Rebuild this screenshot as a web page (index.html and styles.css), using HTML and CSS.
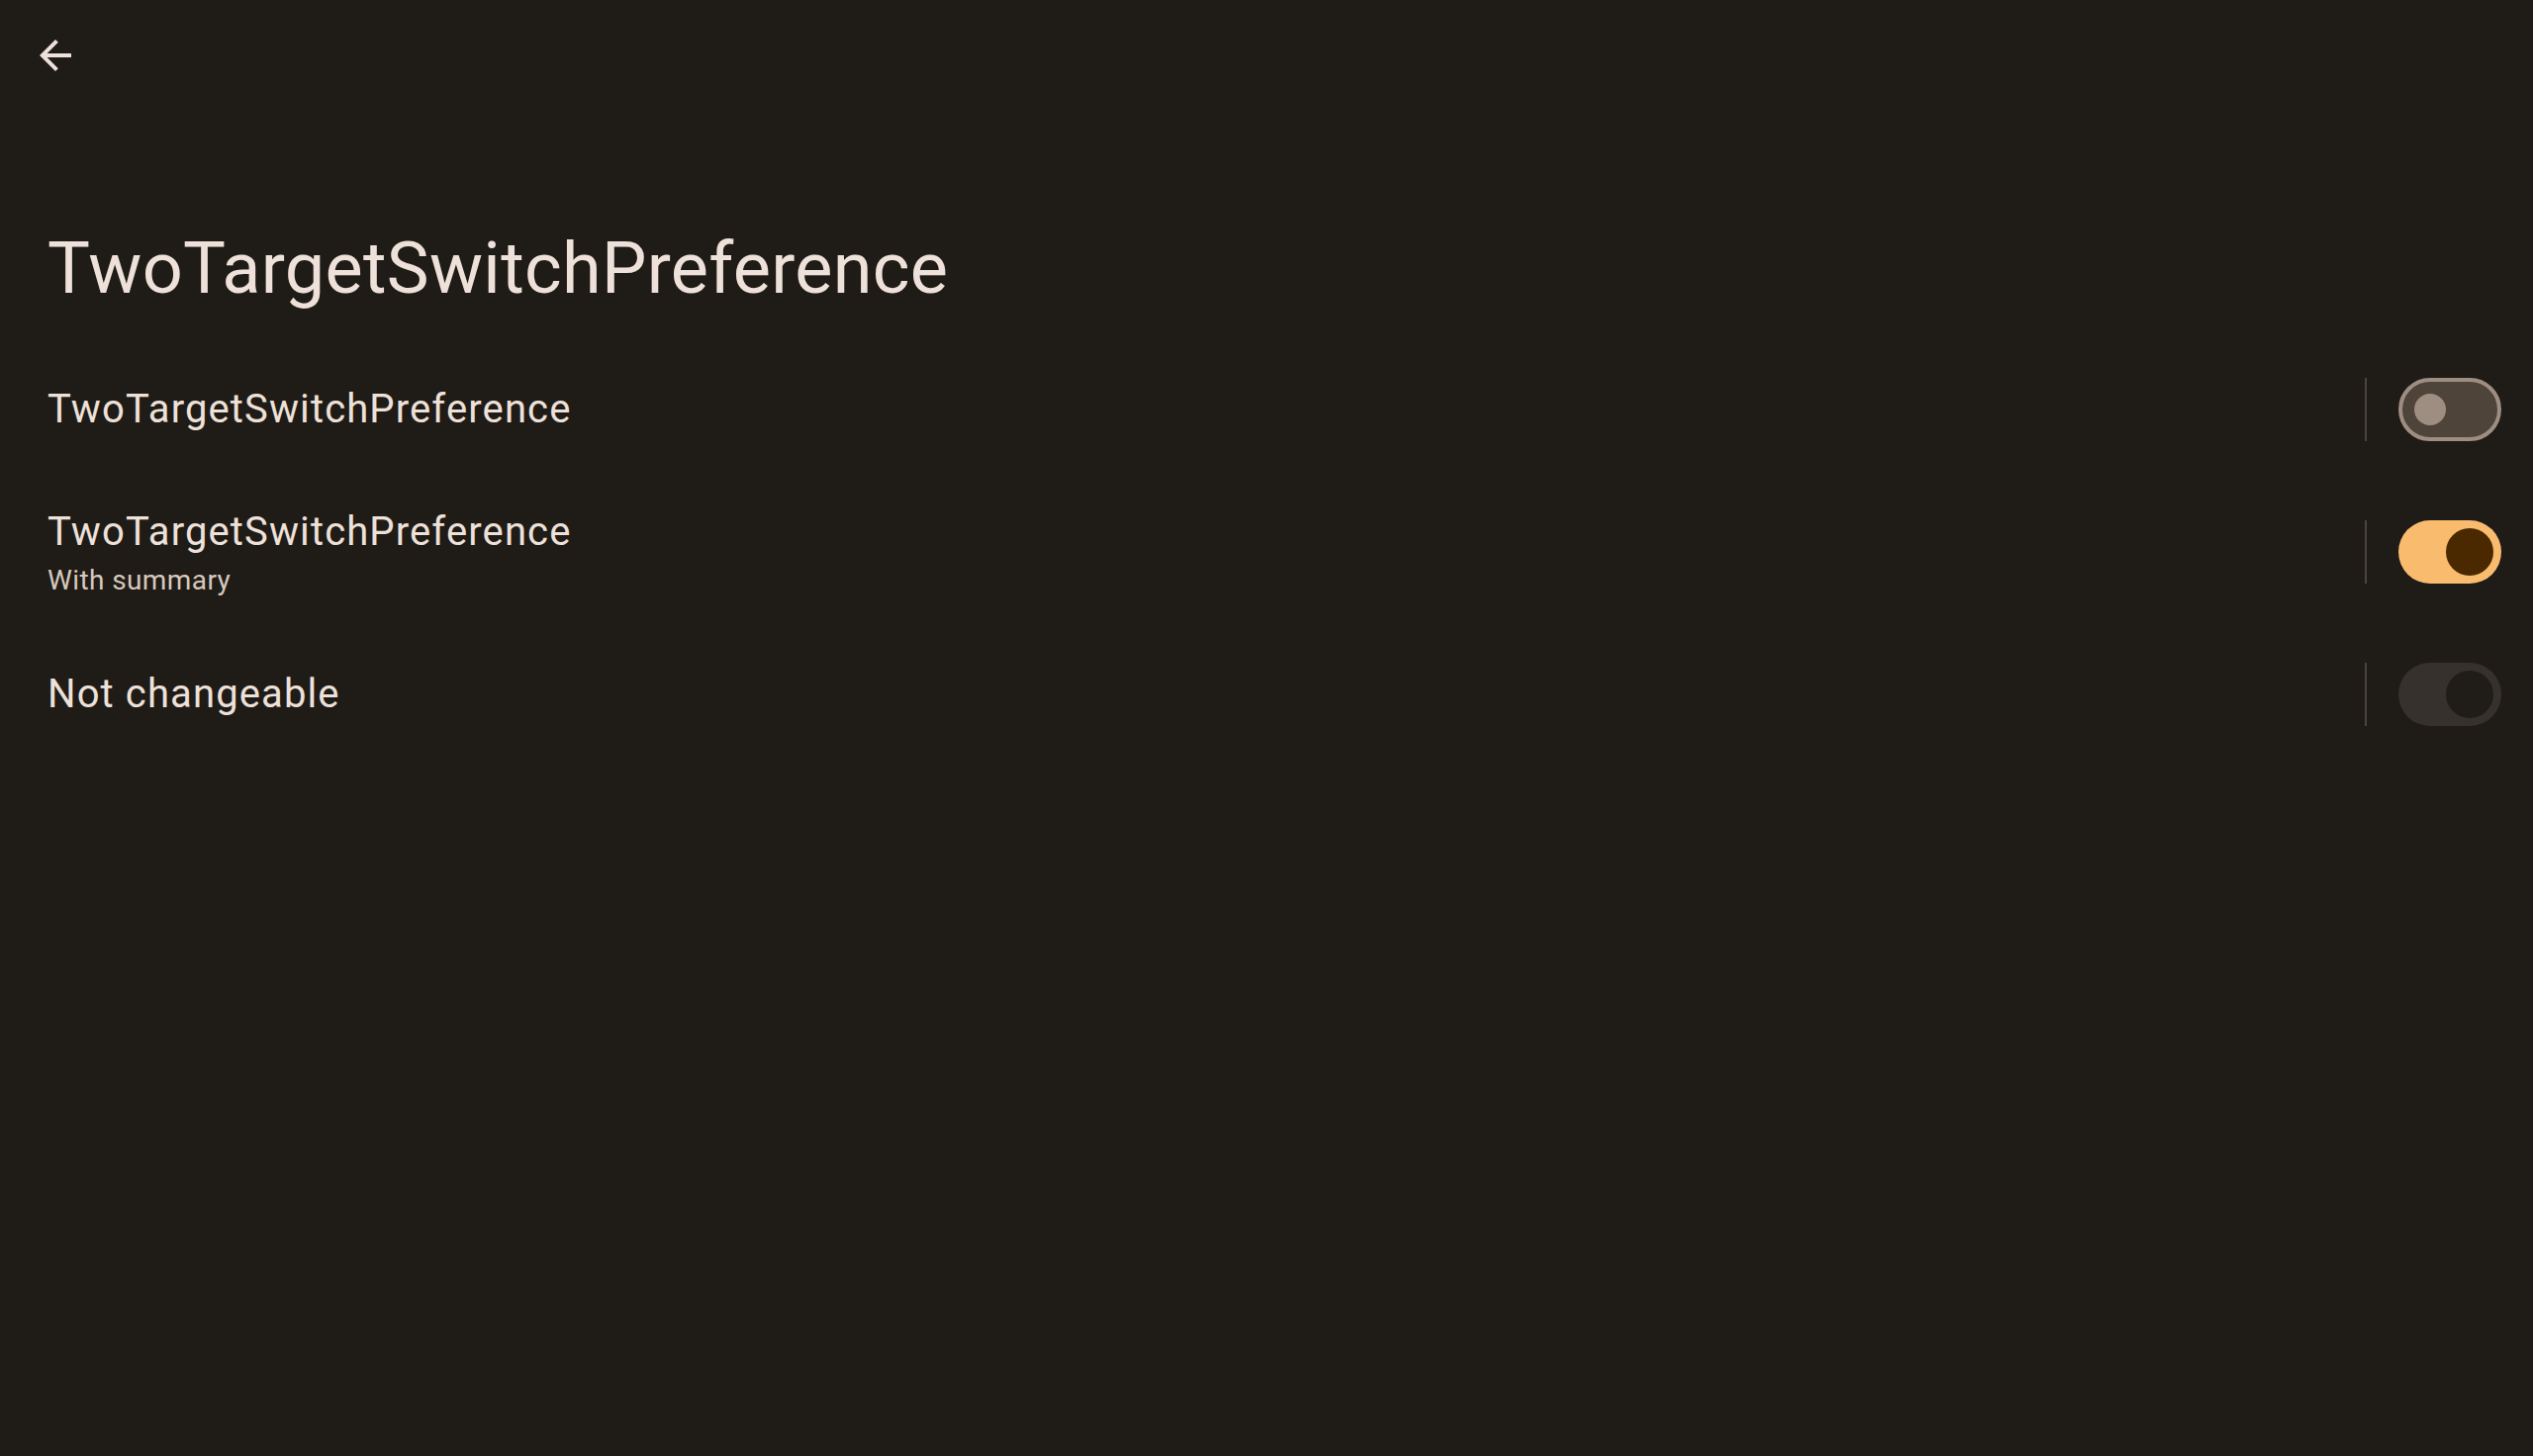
FILE: index.html
```html
<!DOCTYPE html>
<html lang="en">
<head>
<meta charset="utf-8">
<title>TwoTargetSwitchPreference</title>
<link rel="stylesheet" href="styles.css">
</head>
<body>
<div class="screen">
  <header class="appbar">
    <button class="back" aria-label="Navigate up">
      <svg viewBox="0 0 24 24" width="48" height="48"><path d="M20 11H7.83l5.59-5.59L12 4l-8 8 8 8 1.41-1.41L7.83 13H20v-2z" fill="#ede1d9"/></svg>
    </button>
  </header>
  <h1 class="page-title">TwoTargetSwitchPreference</h1>
  <div class="list">
    <div class="pref">
      <div class="pref-text">
        <div class="pref-title">TwoTargetSwitchPreference</div>
      </div>
      <div class="pref-widget">
        <span class="divider"></span>
        <span class="switch off"><span class="thumb"></span></span>
      </div>
    </div>
    <div class="pref pref-summary">
      <div class="pref-text">
        <div class="pref-title">TwoTargetSwitchPreference</div>
        <div class="pref-sub">With summary</div>
      </div>
      <div class="pref-widget">
        <span class="divider"></span>
        <span class="switch on"><span class="thumb"></span></span>
      </div>
    </div>
    <div class="pref">
      <div class="pref-text">
        <div class="pref-title">Not changeable</div>
      </div>
      <div class="pref-widget">
        <span class="divider"></span>
        <span class="switch disabled"><span class="thumb"></span></span>
      </div>
    </div>
  </div>
</div>
</body>
</html>
```
FILE: styles.css
```css
html, body {
  margin: 0;
  padding: 0;
  background: #1f1b17;
}
body {
  font-family: Roboto, "Noto Sans", sans-serif;
  color: #ede1d9;
  width: 2560px;
  height: 1472px;
  overflow: hidden;
}
.appbar {
  padding: 32px;
  height: 48px;
  display: flex;
  align-items: center;
}
.back {
  width: 48px;
  height: 48px;
  padding: 0;
  margin: 0;
  border: 0;
  background: none;
  display: block;
}
.back svg { display: block; }
.page-title {
  margin: 116px 0 0;
  padding: 0 48px;
  font-size: 72px;
  line-height: 88px;
  font-weight: 400;
  letter-spacing: 0.3px;
}
.list {
  margin-top: 34px;
  display: flex;
  flex-direction: column;
}
.pref {
  display: flex;
  align-items: center;
  min-height: 128px;
  padding: 0 32px 0 48px;
  box-sizing: border-box;
}
.pref-summary {
  padding-top: 31px;
  padding-bottom: 31px;
}
.pref-text {
  flex: 1;
  display: flex;
  flex-direction: column;
}
.pref-summary .pref-text {
  padding-top: 3px;
}
.pref-title {
  font-size: 40px;
  line-height: 52px;
  letter-spacing: 1.12px;
  color: #ede1d9;
}
.pref-sub {
  margin-top: 3px;
  font-size: 28px;
  line-height: 40px;
  letter-spacing: 0.4px;
  color: #d7c8bc;
}
.pref-widget {
  display: flex;
  align-items: center;
  gap: 32px;
}
.divider {
  width: 2px;
  height: 64px;
  background: #4a443f;
}
.switch {
  position: relative;
  width: 104px;
  height: 64px;
  border-radius: 32px;
  box-sizing: border-box;
  display: block;
}
.thumb {
  position: absolute;
  border-radius: 50%;
}
.switch.off {
  background: #4e4439;
  border: 4px solid #9e8e82;
}
.switch.off .thumb {
  width: 32px;
  height: 32px;
  left: 12px;
  top: 12px;
  background: #9e8e82;
}
.switch.on {
  background: #f9bc6f;
}
.switch.on .thumb {
  width: 48px;
  height: 48px;
  left: 48px;
  top: 8px;
  background: #4a2900;
}
.switch.disabled {
  background: #36312d;
}
.switch.disabled .thumb {
  width: 48px;
  height: 48px;
  left: 48px;
  top: 8px;
  background: #201c18;
}
```
